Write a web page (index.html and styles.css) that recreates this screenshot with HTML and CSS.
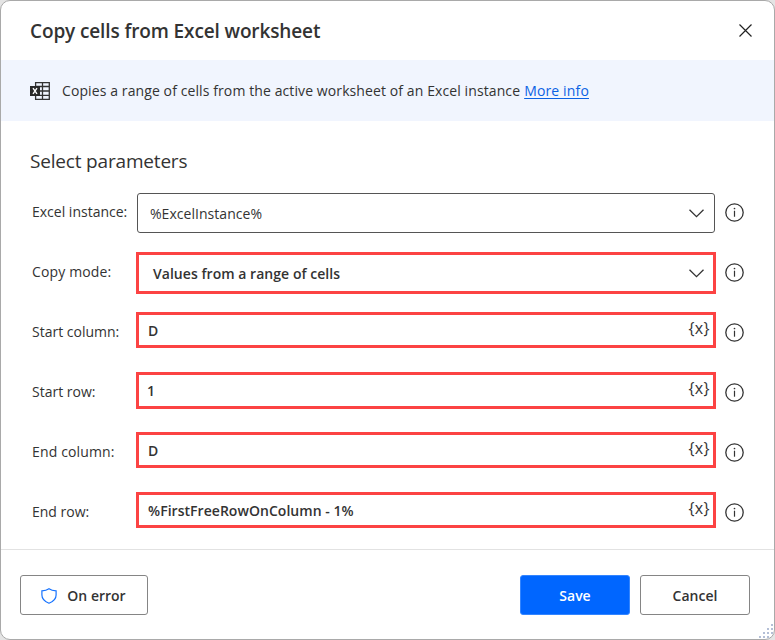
FILE: index.html
```
<!DOCTYPE html>
<html lang="en">
<head>
<meta charset="utf-8">
<title>Copy cells from Excel worksheet</title>
<link rel="stylesheet" href="styles.css">
</head>
<body>
<svg width="0" height="0" class="defs">
  <symbol id="info" viewBox="0 0 20 20"><circle cx="10.500" cy="10.500" r="8.700" fill="none" stroke="#333" stroke-width="1.300"/><path d="M10.500 8.700v6" stroke="#333" stroke-width="1.200"/><circle cx="10.500" cy="6.500" r=".85" fill="#333"/></symbol>
  <symbol id="chev" viewBox="0 0 16 10"><path d="M1.500 1.700l7 7 7-7" fill="none" stroke="#333" stroke-width="1.300"/></symbol>
</svg>
<div class="dialog">
  <header class="head">
    <h1>Copy cells from Excel worksheet</h1>
    <svg class="close" width="14" height="14" viewBox="0 0 14 14"><path d="M1.500.5l12 12M13.500.5l-12 12" stroke="#222" stroke-width="1.200"/></svg>
  </header>
  <div class="band">
    <svg width="20" height="18" viewBox="0 0 20 18"><path d="M5.600 4V.7h13.700v16.600H5.600V14M12.500.7v16.600M5.600 4.500h13.700M10 9h9.300M5.600 13.300h13.700" fill="none" stroke="#333" stroke-width="1.300"/><path d="M0 4h10v10H0z" fill="#292929"/><path d="M3 6.200l4 5.600M7 6.200l-4 5.600" stroke="#fff" stroke-width="1.400"/></svg>
    <p><span class="desc">Copies a range of cells from the active worksheet of an Excel instance</span><a class="more">More info</a></p>
  </div>
  <main>
    <h2>Select parameters</h2>
    <div class="row"><label>Excel instance:</label><div class="field select"><span>%ExcelInstance%</span><svg class="chev"><use href="#chev"/></svg></div><svg class="info"><use href="#info"/></svg></div>
    <div class="row"><label class="wide">Copy mode:</label><div class="field marked mode"><span>Values from a range of cells</span><svg class="chev"><use href="#chev"/></svg></div><svg class="info"><use href="#info"/></svg></div>
    <div class="row"><label>Start column:</label><div class="field marked"><span>D</span><i>{x}</i></div><svg class="info"><use href="#info"/></svg></div>
    <div class="row"><label>Start row:</label><div class="field marked tall"><span class="one">1</span><i>{x}</i></div><svg class="info"><use href="#info"/></svg></div>
    <div class="row"><label class="wide">End column:</label><div class="field marked"><span>D</span><i>{x}</i></div><svg class="info"><use href="#info"/></svg></div>
    <div class="row"><label>End row:</label><div class="field marked"><span>%FirstFreeRowOnColumn - 1%</span><i>{x}</i></div><svg class="info"><use href="#info"/></svg></div>
  </main>
  <footer>
    <button class="error"><svg width="16" height="16" viewBox="0 0 16 16"><path d="M8 .8C6 2.200 3.500 2.800.9 2.900V7c0 4 3 6.600 7.100 8.200 4.100-1.600 7.100-4.200 7.100-8.200V2.900C12.500 2.800 10 2.200 8 .8z" fill="none" stroke="#1673ff" stroke-width="1.200"/></svg><span>On error</span></button>
    <button class="save">Save</button>
    <button class="cancel">Cancel</button>
  </footer>
  <svg class="grip" width="14" height="14" viewBox="0 0 14 14" fill="#b4bfd6"><path d="M12 0h2v2h-2zM8 4h2v2H8zM12 4h2v2h-2zM4 8h2v2H4zM8 8h2v2H8zM12 8h2v2h-2zM0 12h2v2H0zM4 12h2v2H4zM8 12h2v2H8zM12 12h2v2h-2z"/></svg>
</div>
</body>
</html>
```
FILE: styles.css
```
* { box-sizing: border-box; }
body { margin: 0; background: #e4e4e4; font: 14px/20px "Open Sans", "Noto Sans", sans-serif; color: #333; }
.defs { position: absolute; }
.dialog { position: relative; width: 775px; height: 640px; background: #fff; border: 1px solid #a9a9a9; border-radius: 10px; overflow: hidden; display: flex; flex-direction: column; white-space: nowrap; }
.head { height: 59px; padding: 0 22px 0 29px; display: flex; align-items: center; justify-content: space-between; }
h1, h2, p { margin: 0; }
h1 { font-size: 19px; line-height: 26px; font-weight: 600; letter-spacing: -.12px; padding-top: 1px; }
.band { height: 61px; background: #f1f5fe; padding-left: 29px; display: flex; align-items: center; gap: 12px; }
.band p { display: flex; gap: 4px; }
.desc { letter-spacing: .1px; }
.more { color: #0b62e4; text-decoration: underline; text-underline-offset: 2px; letter-spacing: .15px; }
main { height: 428px; padding: 27px 28px 0 29px; }
h2 { font-size: 19px; line-height: 26px; font-weight: 400; height: 34px; letter-spacing: -.18px; }
.row { height: 60px; display: flex; align-items: flex-start; }
label { width: 106px; padding: 20px 0 0 2px; }
.wide { letter-spacing: .14px; }
.field { width: 580px; height: 36px; margin-top: 10px; display: flex; align-items: center; justify-content: space-between; font-weight: 600; }
.field span { padding-top: 1px; letter-spacing: .04px; }
.select { width: 578px; height: 40px; margin: 11px 1px 0; border: 1px solid #555; border-radius: 3px; padding: 0 10px 0 12px; font-weight: 400; }
.marked { border: 3px solid #fc4343; padding: 0 3px 0 9px; }
.mode { height: 42px; padding: 0 9px 0 14px; }
.tall { height: 37px; }
.field .one { padding-top: 0; margin-left: -1px; }
.field i { font-style: normal; font-weight: 400; font-size: 16px; letter-spacing: .4px; margin-top: -5px; }
.chev { width: 16px; height: 10px; }
.info { width: 20px; height: 20px; margin: 20px 0 0 8px; }
footer { flex: 1; border-top: 1px solid #e2e2e2; padding: 25px 24px 0 19px; display: flex; gap: 10px; }
button { width: 110px; height: 40px; padding: 1px 0 0; border: 1px solid #858585; border-radius: 3px; background: #fff; font: inherit; font-weight: 600; color: #333; display: flex; align-items: center; justify-content: center; }
.error { width: 128px; gap: 10px; margin-right: auto; padding-right: 1px; }
.save { background: #0066ff; border-color: #3385ff; color: #fff; }
.grip { position: absolute; right: 1px; bottom: 1px; }
```
